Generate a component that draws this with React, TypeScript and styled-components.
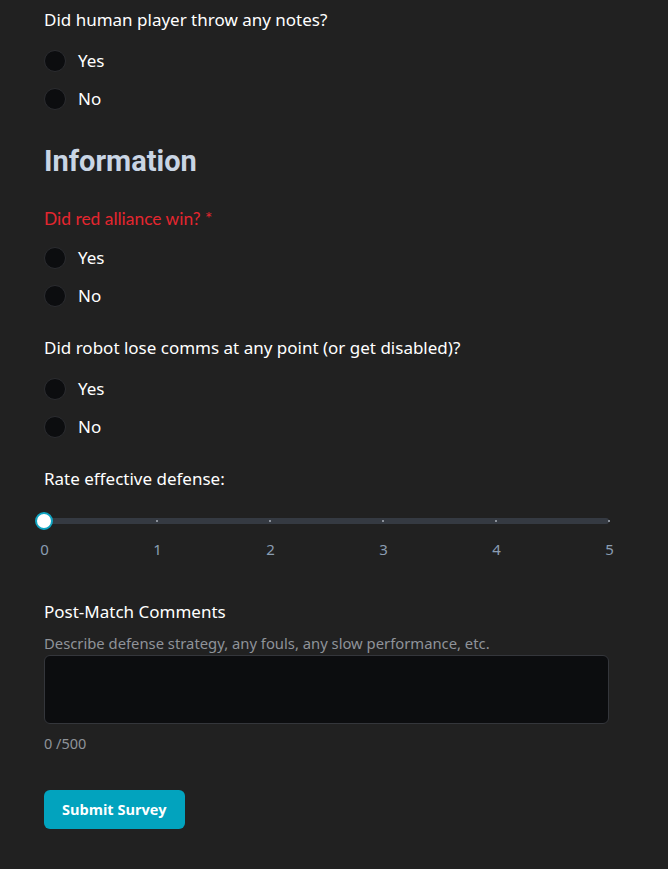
import React, { useState } from "react";
import styled, { createGlobalStyle } from "styled-components";

const GlobalStyle = createGlobalStyle`
  html, body {
    margin: 0;
    padding: 0;
    background: #212121;
  }
  body {
    font-family: "Noto Sans", "Open Sans", sans-serif;
    color: #ffffff;
  }
`;

const Page = styled.main`
  padding: 8px 59px 40px 44px;
  display: flex;
  flex-direction: column;
`;

const Question = styled.fieldset`
  border: none;
  margin: 0 0 29px;
  padding: 0;
  display: flex;
  flex-direction: column;
`;

const QuestionLabel = styled.legend<{ $required?: boolean }>`
  padding: 0;
  margin-bottom: ${(p) => (p.$required ? "16px" : "18px")};
  font-size: ${(p) => (p.$required ? "17.4px" : "17px")};
  line-height: 24px;
  color: ${(p) => (p.$required ? "#e5262f" : "#ffffff")};
  font-family: ${(p) => (p.$required ? `"Lato", sans-serif` : "inherit")};
`;

const Options = styled.div`
  display: flex;
  flex-direction: column;
  gap: 16px;
`;

const Option = styled.label`
  display: flex;
  align-items: center;
  gap: 12px;
  font-size: 17px;
  line-height: 22px;
  cursor: pointer;
`;

const RadioDot = styled.input`
  appearance: none;
  margin: 0;
  width: 22px;
  height: 22px;
  border-radius: 50%;
  background: #0c0d0f;
  border: 1px solid #2b2c30;
  cursor: pointer;

  &:checked {
    background: #0ea5c0;
    border-color: #0ea5c0;
    box-shadow: inset 0 0 0 5px #0c0d0f;
  }
`;

const SectionTitle = styled.h2`
  margin: 5px 0 29px;
  font-family: "Roboto", sans-serif;
  font-weight: 700;
  font-size: 29px;
  line-height: 34px;
  color: #c9d5e4;
`;

const SliderBlock = styled.div`
  margin: 0 0 41px;
  display: flex;
  flex-direction: column;
`;

const SliderLabel = styled.div`
  font-size: 17px;
  line-height: 24px;
  margin-bottom: 27px;
`;

const Track = styled.div`
  position: relative;
  height: 6px;
  border-radius: 3px;
  background: #353a42;
`;

const Tick = styled.span`
  position: absolute;
  top: 2px;
  width: 2px;
  height: 2px;
  margin-left: -1px;
  background: #8a9099;
`;

const Thumb = styled.span`
  position: absolute;
  top: 50%;
  width: 14px;
  height: 14px;
  border-radius: 50%;
  background: #ffffff;
  border: 2px solid #0fa3c0;
  transform: translate(-50%, -50%);
`;

const Marks = styled.div`
  display: flex;
  justify-content: space-between;
  margin: 15px -5px 0 -4px;
  font-size: 15px;
  line-height: 20px;
  color: #8a9db2;
`;

const Mark = styled.span`
  width: 9px;
  text-align: center;
`;

const CommentBlock = styled.div`
  display: flex;
  flex-direction: column;
`;

const CommentLabel = styled.label`
  font-size: 17px;
  line-height: 24px;
  margin-bottom: 10px;
`;

const CommentHint = styled.div`
  font-size: 14.8px;
  line-height: 18px;
  color: #8f9399;
  margin-bottom: 3px;
`;

const TextArea = styled.textarea`
  box-sizing: border-box;
  height: 69px;
  resize: none;
  background: #0c0d0f;
  border: 1px solid #34363b;
  border-radius: 6px;
  color: #fff;
  font-family: inherit;
  font-size: 15px;
  padding: 8px 12px;
  outline: none;
`;

const Counter = styled.div`
  margin-top: 9px;
  font-size: 14.5px;
  line-height: 20px;
  color: #8f9399;
`;

const SubmitButton = styled.button`
  align-self: flex-start;
  margin-top: 37px;
  height: 39px;
  padding: 0 18px;
  border: none;
  border-radius: 6px;
  background: #02a3be;
  color: #ffffff;
  font-family: "Open Sans", sans-serif;
  font-weight: 700;
  font-size: 14.5px;
  cursor: pointer;
`;

type YesNoProps = {
  name: string;
  label: string;
  required?: boolean;
};

function YesNo({ name, label, required }: YesNoProps) {
  const [value, setValue] = useState<string | null>(null);
  return (
    <Question>
      <QuestionLabel $required={required}>
        {label}
        {required && " *"}
      </QuestionLabel>
      <Options>
        {["Yes", "No"].map((opt) => (
          <Option key={opt}>
            <RadioDot
              type="radio"
              name={name}
              checked={value === opt}
              onChange={() => setValue(opt)}
            />
            {opt}
          </Option>
        ))}
      </Options>
    </Question>
  );
}

export default function App() {
  const [rating] = useState(0);
  const [comment, setComment] = useState("");
  const marks = [0, 1, 2, 3, 4, 5];

  return (
    <>
      <GlobalStyle />
      <Page>
        <YesNo name="humanNotes" label="Did human player throw any notes?" />

        <SectionTitle>Information</SectionTitle>

        <YesNo name="redWin" label="Did red alliance win?" required />
        <YesNo
          name="lostComms"
          label="Did robot lose comms at any point (or get disabled)?"
        />

        <SliderBlock>
          <SliderLabel>Rate effective defense:</SliderLabel>
          <Track>
            {marks.slice(1).map((m) => (
              <Tick key={m} style={{ left: `${(m / 5) * 100}%` }} />
            ))}
            <Thumb style={{ left: `${(rating / 5) * 100}%` }} />
          </Track>
          <Marks>
            {marks.map((m) => (
              <Mark key={m}>{m}</Mark>
            ))}
          </Marks>
        </SliderBlock>

        <CommentBlock>
          <CommentLabel htmlFor="comments">Post-Match Comments</CommentLabel>
          <CommentHint>
            Describe defense strategy, any fouls, any slow performance, etc.
          </CommentHint>
          <TextArea
            id="comments"
            maxLength={500}
            value={comment}
            onChange={(e) => setComment(e.target.value)}
          />
          <Counter>{comment.length} /500</Counter>
        </CommentBlock>

        <SubmitButton>Submit Survey</SubmitButton>
      </Page>
    </>
  );
}
